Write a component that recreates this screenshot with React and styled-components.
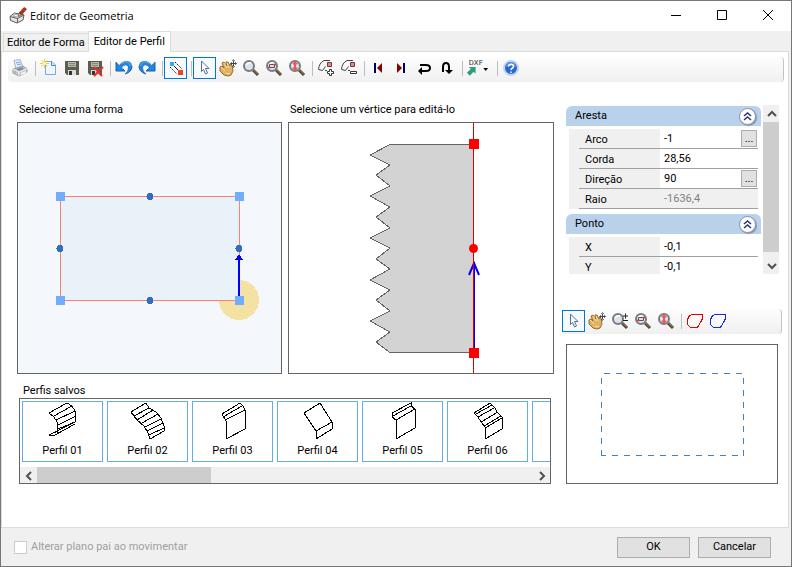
import { useState } from 'react';
import styled, { createGlobalStyle, css } from 'styled-components';

const color = {
    text: '#000000',
    textMuted: '#a0a0a0',
    surface: '#f0f0f0',
    white: '#ffffff',
    line: '#dcdcdc',
    frame: '#646464',
    thumb: '#cdcdcd',
    accent: '#0078d7',
    header: '#b9d1ea',
};

const GlobalStyle = createGlobalStyle`
    * {
        box-sizing: border-box;
    }
    body {
        margin: 0;
        background: ${color.surface};
        color: ${color.text};
        font-family: Roboto, "Liberation Sans", sans-serif;
        font-size: 11px;
        line-height: 16px;
    }
    button, input {
        margin: 0;
        padding: 0;
        color: inherit;
        font: inherit;
    }
    svg {
        display: block;
    }
`;

const Window = styled.div`
    display: flex;
    flex-direction: column;
    min-height: 100vh;
    border: 1px solid #777777;
    background: ${color.surface};
`;

const TitleBar = styled.header`
    display: flex;
    align-items: center;
    height: 30px;
    padding-left: 8px;
    background: ${color.white};
`;

const Title = styled.h1`
    flex: 1;
    margin: 0 0 0 3px;
    font-family: "Open Sans", "Noto Sans", sans-serif;
    font-size: 11px;
    font-weight: 400;
`;

const CaptionButton = styled.button`
    display: flex;
    align-items: center;
    justify-content: center;
    width: 46px;
    height: 30px;
    border: none;
    background: transparent;
`;

const TabStrip = styled.div`
    display: flex;
    align-items: flex-end;
    height: 20px;
    padding-left: 2px;
`;

const Tab = styled.button`
    height: ${props => props.$active ? '21px' : '18px'};
    margin-bottom: ${props => props.$active ? '-1px' : '0'};
    padding: 0 ${props => props.$active ? '5px' : '3px'};
    border: 1px solid ${color.line};
    border-bottom: none;
    background: ${props => props.$active ? color.white : color.surface};
    line-height: 16px;
    z-index: 1;
    & + & {
        margin-left: -1px;
    }
`;

const Page = styled.main`
    flex: 1;
    margin-right: 2px;
    padding: 5px 4px 43px 6px;
    border: 1px solid ${color.line};
    background: ${color.white};
`;

const ToolBar = styled.div`
    display: flex;
    align-items: flex-start;
    height: 25px;
    padding-top: ${props => props.$small ? '1px' : '0'};
    border-right: 1px solid #c4c4c4;
    border-radius: 4px;
    background: linear-gradient(#fdfdfd, #f0f0f0);
`;

const ToolButton = styled.button`
    display: flex;
    align-items: center;
    justify-content: center;
    flex: none;
    width: ${props => props.$wide ? '29px' : '23px'};
    height: 22px;
    border: 1px solid ${props => props.$checked ? color.accent : 'transparent'};
    background: ${props => props.$checked ? '#f7fafd' : 'transparent'};
`;

const Separator = styled.span`
    flex: none;
    width: 1px;
    height: 15px;
    margin: 4px 1px 0 4px;
    background: #bdbdbd;
`;

const Workspace = styled.div`
    display: grid;
    grid-template-columns: minmax(0, 1fr) 216px;
    gap: 12px;
    padding: 20px 2px 0 9px;
`;

const EditorColumn = styled.div`
    display: flex;
    flex-direction: column;
    gap: 9px;
    min-width: 0;
`;

const CanvasRow = styled.div`
    display: grid;
    grid-template-columns: 1fr 1fr;
    gap: 6px;
`;

const CanvasTitle = styled.h2`
    margin: 0 0 4px 2px;
    font-size: 11px;
    font-weight: 400;
`;

const Canvas = styled.div`
    display: flex;
    align-items: center;
    justify-content: center;
    overflow: hidden;
    border: 1px solid ${color.frame};
    background: ${props => props.$tinted ? '#f4f8fc' : color.white};
`;

const SavedSection = styled.section`
    margin: 0 3px 0 2px;
`;

const SavedTitle = styled.h2`
    margin: 0 0 0 4px;
    font-size: 11px;
    font-weight: 400;
    line-height: 15px;
`;

const SavedBox = styled.div`
    overflow: hidden;
    border: 1px solid ${color.frame};
`;

const SavedList = styled.div`
    display: flex;
    gap: 4px;
    overflow: hidden;
    padding: 2px 0 5px 2px;
`;

const SavedItem = styled.button`
    display: flex;
    flex-direction: column;
    align-items: center;
    flex: none;
    width: 81px;
    height: 61px;
    border: 1px solid #64ade9;
    background: ${color.white};
`;

const ScrollBar = styled.div`
    display: flex;
    flex-direction: ${props => props.$vertical ? 'column' : 'row'};
    flex: none;
    ${props => props.$vertical ? css`width: 16px;` : css`height: 16px;`}
    background: ${color.surface};
`;

const ScrollArrow = styled.button`
    display: flex;
    align-items: center;
    justify-content: center;
    flex: none;
    width: 17px;
    height: 17px;
    border: none;
    background: transparent;
`;

const ScrollTrack = styled.div`
    flex: 1;
`;

const ScrollThumb = styled.div`
    width: ${props => props.$vertical ? '100%' : '35%'};
    height: ${props => props.$vertical ? '96%' : '100%'};
    background: ${color.thumb};
`;

const SideColumn = styled.aside`
    display: flex;
    flex-direction: column;
    padding-top: 3px;
`;

const PropertyPanel = styled.div`
    display: flex;
    gap: 2px;
    height: 169px;
    margin: 0 3px 35px 0;
`;

const PropertyList = styled.div`
    flex: 1;
    min-width: 0;
    overflow: hidden;
`;

const GroupHeader = styled.div`
    display: flex;
    align-items: center;
    justify-content: space-between;
    height: 20px;
    margin: 1px 0 3px;
    padding: 0 5px 0 9px;
    border-radius: 6px 6px 0 0;
    background: ${color.header};
`;

const GroupBody = styled.div`
    margin: 0 3px 5px;
`;

const PropertyRow = styled.div`
    display: grid;
    grid-template-columns: 91px minmax(0, 1fr);
    height: 20px;
    background: linear-gradient(#a0a0a0, #a0a0a0) 10px 100% / 100% 1px no-repeat ${color.surface};
`;

const PropertyLabel = styled.label`
    padding-left: 16px;
    line-height: 21px;
`;

const PropertyValue = styled.div`
    display: flex;
    height: 19px;
    padding-right: 1px;
    background: ${props => props.$disabled ? color.surface : color.white};
`;

const PropertyInput = styled.input`
    flex: 1;
    min-width: 0;
    padding-left: 4px;
    border: none;
    background: transparent;
    &:disabled {
        color: #808080;
    }
`;

const EllipsisButton = styled.button`
    width: 16px;
    height: 17px;
    margin-top: 1px;
    border: 1px solid #adadad;
    background: #e1e1e1;
`;

const RoundButton = styled.button`
    display: flex;
    align-items: center;
    justify-content: center;
    width: 17px;
    height: 17px;
    border: 1px solid #8790ad;
    border-radius: 50%;
    background: ${color.white};
    box-shadow: 1px 1px 1px #8494b4;
`;

const PreviewTools = styled.div`
    margin: 0 0 10px -4px;
`;

const Preview = styled(Canvas)`
    margin-right: 4px;
`;

const Footer = styled.footer`
    display: flex;
    align-items: center;
    justify-content: space-between;
    height: 38px;
    padding: 0 20px 0 13px;
`;

const CheckLabel = styled.label`
    display: flex;
    align-items: center;
    gap: 4px;
    color: ${color.textMuted};
`;

const CheckBox = styled.input`
    appearance: none;
    width: 13px;
    height: 13px;
    border: 1px solid #cccccc;
    background: ${color.white};
`;

const ButtonGroup = styled.div`
    display: flex;
    gap: 8px;
`;

const DialogButton = styled.button`
    width: 73px;
    height: 21px;
    border: 1px solid #adadad;
    background: #e1e1e1;
`;

const Icon = ({ size = 18, children }) => (
    <svg width={size} height={size} viewBox={`0 0 ${size} ${size}`} fill="none" aria-hidden="true">
        {children}
    </svg>
);

const AppIcon = () => (
    <Icon>
        <path d="M1 9.500 5.500 6 15 8l-1 5-6 3-6.500-2.500z" fill="#e4e4e4" stroke="#5c5c5c" />
        <path d="m1 9.500 7.500 2L15 8M8.500 11.500V16" stroke="#5c5c5c" />
        <path d="m4 9 2.500-1.500L11 8.500 8.500 10z" fill="#fff" stroke="#8a8a8a" strokeWidth=".7" />
        <path d="m10 6 5-5.500 2.500 1.500-5 6z" fill="#b8301c" stroke="#7c2416" strokeWidth=".7" />
        <path d="m10 6 2.500 2L9 9.500z" fill="#e3b887" stroke="#50351f" strokeWidth=".5" />
    </Icon>
);

const PrintIcon = () => (
    <Icon>
        <path d="m3 1.500 6-1L12 8l-7 2z" fill="#e4f0fc" stroke="#9db5d3" />
        <path d="m5 4 4-1M6 6l4-1" stroke="#6ea5dd" />
        <path d="m2 10 10-3 4 3v3l-8 4-6-3z" fill="#c3c5c8" stroke="#9a9da3" />
        <path d="m2 10 6 3 8-3M8 13v4" stroke="#f2f2f2" />
        <path d="m5 10 6-2 2 2-5 2z" fill="#888e98" />
        <path d="m10 14 5-2v2l-5 2z" fill="#f3f6fa" />
        <path d="M4 13h1" stroke="#57c047" />
    </Icon>
);

const NewIcon = () => (
    <Icon>
        <path d="M5.500 2.500h6.500l3.500 3.500v9.500h-10z" fill="#eef6ff" stroke="#7ba9dc" />
        <path d="M11.500 2.500V6.500h4" fill="#cfe3f8" stroke="#4c87c7" />
        <path d="M4.500 0v9M0 4.500h9M1.500 1.500l6 6M7.500 1.500l-6 6" stroke="#efcc37" />
        <circle cx="4.500" cy="4.500" r="1.500" fill="#fff9bd" />
    </Icon>
);

const SaveIcon = ({ remove }) => (
    <Icon>
        <path d="M2 2h14v14H4l-2-2z" fill="#5c5c50" />
        <path d="M5 3h8v5H5z" fill="#b5b7a0" />
        <path d="M6 4.500h6M6 6.500h6" stroke="#8b8d7a" />
        <path d="M5 11h8v5H5z" fill="#dcdcd6" />
        <path d="M6 12h3v4H6z" fill="#333" />
        {remove && <path d="m8 8 8 9M17 8l-9 9" stroke="#e3302f" strokeWidth="2" />}
    </Icon>
);

const UndoIcon = ({ flip }) => (
    <Icon>
        <g transform={flip ? 'matrix(-1 0 0 1 18 0)' : undefined}>
            <path d="M1 3v9h9L7 9C8.500 5.500 13 5 13 9q0 3-3 6 7-2 7-8c0-6-9-7-12.500-1z" fill="#2583da" />
            <path d="M1 3v9h9L7.500 9.500M10 15q7-2 7-8" stroke="#1760b0" />
            <path d="M7 5c3-4 8-2 8 2" stroke="#6ab5ef" />
        </g>
    </Icon>
);

const EdgeIcon = () => (
    <Icon>
        <path d="m3 8 7 7M8 3l7 7" stroke="#111" strokeDasharray="1.500 1" />
        <path d="m6 6 5 5" stroke="#111" />
        <path d="M3 3h4v4H3z" fill="#31a9ea" />
        <path d="M11 11h5v5h-5z" fill="#ef3f2f" />
    </Icon>
);

const PointerIcon = () => (
    <Icon>
        <path d="M5.500 2 13 9.500H9.500l2 4.500-2 1-2-4.500-2 2z" fill="#f9fcff" stroke="#58708f" />
    </Icon>
);

const HandIcon = () => (
    <Icon>
        <path d="m1 8 2-1 2 2-2-5 2-1 3 4-1-4h2l2 4 1-2 1 1 1 6-2 4-3 1-4-1-4-4z" fill="#dfb367" stroke="#9c6925" />
        <path d="m5 4 3 5M8 4l2 5M2 8l4 4M7 14l4 1" stroke="#fae0a1" />
        <path d="M14.500 1.500v6M11.500 4.500h6" stroke="#3c4450" />
        <path d="m13 2 1.500-1.500L16 2M13 7l1.500 1.500L16 7M13 3l-1.500 1.500L13 6M16 3l1.500 1.500L16 6" stroke="#3c4450" strokeWidth=".7" />
    </Icon>
);

const LensIcon = ({ kind }) => (
    <Icon>
        <path d="m11 11 5 5" stroke="#4a4038" strokeWidth="3" />
        <path d="m11.500 11 4.500 4.500" stroke="#b48a4c" />
        <circle cx="7" cy="7" r="5" fill="#dde3e8" stroke="#757c84" strokeWidth="2" />
        <path d="M4 6q2-3 5-2" stroke="#fff" strokeWidth="1.500" />
        {kind === 'area' && (
            <>
                <path d="M4.500 5.500h5v3h-5z" stroke="#555" />
                <path d="M3 8.500h3M8 5.500h3" stroke="#dc3c40" strokeWidth="1.500" />
            </>
        )}
        {kind === 'fit' && <path d="M7 2.500v9M4.500 4.500h5M4.500 9.500h5" stroke="#f0555a" strokeWidth="2" />}
        {kind === 'scale' && <path d="M12 4h5M14.500 1.500v5M12 8.500h5" stroke="#222" />}
    </Icon>
);

const VertexIcon = ({ remove }) => (
    <Icon>
        <path d="M13 1.500H7Q2 4 1.500 10.500l4 1 3-4M8 11.500h2" stroke="#444" />
        <path d="M10.500 3.500h4v4h-4z" fill="#f08580" stroke="#6b3c3a" />
        {remove
            ? <path d="M10.500 12.500h6v2h-6z" fill="#fff" stroke="#333" />
            : <path d="M12.500 10.500h2v2h2v2h-2v2h-2v-2h-2v-2h2z" fill="#fff" stroke="#333" />}
    </Icon>
);

const StepIcon = ({ last }) => (
    <Icon>
        <path d={last ? 'M5 4v10l5-5z' : 'M13 4v10L8 9z'} fill="#870000" />
        <path d={last ? 'M11 4h2v10h-2z' : 'M5 4h2v10H5z'} fill="#00006c" />
    </Icon>
);

const TurnIcon = ({ down }) => (
    <Icon>
        <g transform={down ? 'matrix(0 1 -1 0 18 0)' : undefined}>
            <path d={down ? 'M13 13H8q-4 0-4-3t4-3h4' : 'M5 6h6q4 0 4 3t-4 3H6'} stroke="#000" strokeWidth="2" />
            <path d={down ? 'm15 7-4-4v8z' : 'm3 12 4-4v8z'} fill="#000" />
        </g>
    </Icon>
);

const DxfIcon = () => (
    <svg width="28" height="20" viewBox="0 0 28 20" aria-hidden="true">
        <text x="4" y="7" fontFamily="Roboto, sans-serif" fontSize="8" fill="#333">DXF</text>
        <path d="m2 15 4-4-2-2h7v7l-2-2-4 4z" fill="#2d9c77" />
        <path d="M19 10h5l-2.500 3z" fill="#000" />
    </svg>
);

const HelpIcon = () => (
    <Icon>
        <circle cx="9" cy="9" r="7" fill="#2869ce" stroke="#c3d5ee" strokeWidth="2" />
        <path d="M4 8a5 5 0 0 1 10 0Q9 6 4 8" fill="#5a90e4" />
        <path d="M6.500 7.500c0-3 5-3 5 0 0 2-2.500 1.500-2.500 3.500M9 12.500V14" stroke="#fff" strokeWidth="1.500" />
    </Icon>
);

const ShapeIcon = ({ stroke }) => (
    <Icon>
        <path d="M6.500 2.500h10v4l-2 4-3 5h-7l-3-3v-5l2-4z" fill="#fafafa" stroke={stroke} shapeRendering="crispEdges" />
    </Icon>
);

const Chevron = ({ d }) => (
    <Icon size={10}>
        <path d={d} stroke="#505050" strokeWidth="2" />
    </Icon>
);

const mainTools = [
    { label: 'Imprimir', icon: <PrintIcon /> },
    null,
    { label: 'Novo', icon: <NewIcon /> },
    { label: 'Salvar', icon: <SaveIcon /> },
    { label: 'Excluir', icon: <SaveIcon remove /> },
    null,
    { label: 'Desfazer', icon: <UndoIcon /> },
    { label: 'Refazer', icon: <UndoIcon flip /> },
    null,
    { label: 'Arestas', icon: <EdgeIcon />, checked: true },
    null,
    { label: 'Selecionar', icon: <PointerIcon />, checked: true },
    { label: 'Mover', icon: <HandIcon /> },
    { label: 'Zoom', icon: <LensIcon /> },
    { label: 'Zoom janela', icon: <LensIcon kind="area" /> },
    { label: 'Zoom tudo', icon: <LensIcon kind="fit" /> },
    null,
    { label: 'Inserir vértice', icon: <VertexIcon /> },
    { label: 'Remover vértice', icon: <VertexIcon remove /> },
    null,
    { label: 'Anterior', icon: <StepIcon /> },
    { label: 'Próximo', icon: <StepIcon last /> },
    { label: 'Inverter horizontal', icon: <TurnIcon /> },
    { label: 'Inverter vertical', icon: <TurnIcon down /> },
    null,
    { label: 'Exportar DXF', icon: <DxfIcon />, wide: true },
    null,
    { label: 'Ajuda', icon: <HelpIcon /> },
];

const previewTools = [
    { label: 'Selecionar', icon: <PointerIcon />, checked: true },
    { label: 'Mover', icon: <HandIcon /> },
    { label: 'Zoom', icon: <LensIcon kind="scale" /> },
    { label: 'Zoom janela', icon: <LensIcon kind="area" /> },
    { label: 'Zoom tudo', icon: <LensIcon kind="fit" /> },
    null,
    { label: 'Forma vermelha', icon: <ShapeIcon stroke="#e60000" /> },
    { label: 'Forma azul', icon: <ShapeIcon stroke="#1030e0" /> },
];

const Tools = ({ items, small }) => (
    <ToolBar $small={small}>
        {items.map((item, index) => item
            ? <ToolButton key={index} aria-label={item.label} $checked={item.checked} $wide={item.wide}>{item.icon}</ToolButton>
            : <Separator key={index} />)}
    </ToolBar>
);

// Line drawings of the bent sheets, 81 units wide
const savedProfiles = [
    { name: 'Perfil 01', d: 'M27 11 45 1 50 4 53 9 54 14 53 20 37 28M27 11 32 15 35 20 36 25 35 31M32 14 50 4M34 18 53 9M36 23 54 14M36 27 53 20M35 29 27 33H33L53 22M33 31 37 28' },
    { name: 'Perfil 02', d: 'M24 10 39 1 42 6 49 10 54 16 57 24V29L43 37 41 31 37 24 30 18ZM27 14 42 6M30 18 46 8M35 21 51 12M38 25 54 17M40 29 56 21M42 33 57 26' },
    { name: 'Perfil 03', d: 'M30 12 48 1 51 4 53 8V27L34 37V19ZM31 15 50 4M33 18 53 8' },
    { name: 'Perfil 04', d: 'M27 11 43 1 55 20V27L39 37V29ZM39 29 55 20' },
    { name: 'Perfil 05', d: 'M30 11 49 1V4L53 7V26L34 37V18L30 15ZM31 14 49 4M34 18 53 7' },
    { name: 'Perfil 06', d: 'M27 11 43 1 48 6 50 10 55 15V27L38 37V25L34 20 31 15ZM29 12 45 3M31 15 47 6M34 20 51 10M37 24 54 14M38 26 55 16' },
    { name: '', d: '' },
];

const propertyGroups = [
    {
        name: 'Aresta',
        rows: [
            { id: 'arco', label: 'Arco', value: '-1', more: true },
            { id: 'corda', label: 'Corda', value: '28,56' },
            { id: 'direcao', label: 'Direção', value: '90', more: true },
            { id: 'raio', label: 'Raio', value: '-1636,4', disabled: true },
        ],
    },
    {
        name: 'Ponto',
        rows: [
            { id: 'x', label: 'X', value: '-0,1' },
            { id: 'y', label: 'Y', value: '-0,1' },
        ],
    },
];

const ShapeDrawing = () => (
    <svg width="263" height="250" viewBox="0 0 263 250" shapeRendering="crispEdges">
        <circle cx="221" cy="177" r="20" fill="#f4e1a4" />
        <path d="M42.500 73.500h179v104h-179z" fill="#e9f1f9" stroke="#fa8072" />
        {[[42, 73], [221, 73], [42, 177], [221, 177]].map(([x, y]) =>
            <rect key={`${x}-${y}`} x={x - 4} y={y - 4} width="9" height="9" fill="#70adff" />)}
        {[[132, 73], [42, 125], [221, 125], [132, 177]].map(([x, y]) =>
            <circle key={`${x}-${y}`} cx={x} cy={y + 0.5} r="3.500" fill="#2f6fbe" />)}
        <path d="M220 136h2v37h-2zM221 131l4 6h-8z" fill="#0000ff" />
    </svg>
);

const ProfileDrawing = () => (
    <svg width="264" height="250" viewBox="0 0 264 250">
        <path
            d="M184.500 21.500H101L81 32 101 42 87 52 101 63 81 73 101 84 87 94 101 105 81 115 101 125 87 136 101 146 81 157 101 167 87 177 101 188 81 198 101 209 87 219 101 229.500H184.500Z"
            fill="#d3d3d3"
            stroke="#646464"
            shapeRendering="crispEdges"
        />
        <path d="M185 139v86" stroke="#0000ff" strokeWidth="2" />
        <path d="m180 152 5-12 5 12" stroke="#0000ff" strokeWidth="2" fill="none" />
        <path d="M184.500 0v250" stroke="#dc0000" />
        <path d="M180 16h10v10h-10zM180 225h10v10h-10z" fill="#ff0000" />
        <circle cx="184.500" cy="125.500" r="4.500" fill="#ff0000" />
    </svg>
);

const PropertyGroup = ({ group }) => (
    <>
        <GroupHeader>
            {group.name}
            <RoundButton aria-label={`Recolher ${group.name}`}>
                <svg width="9" height="11" viewBox="0 0 9 11" fill="none">
                    <path d="m1 5 3.500-3L8 5M1 9l3.500-3L8 9" stroke="#27366c" strokeWidth="1.500" />
                </svg>
            </RoundButton>
        </GroupHeader>
        <GroupBody>
            {group.rows.map(row =>
                <PropertyRow key={row.id}>
                    <PropertyLabel htmlFor={row.id}>{row.label}</PropertyLabel>
                    <PropertyValue $disabled={row.disabled}>
                        <PropertyInput id={row.id} defaultValue={row.value} disabled={row.disabled} />
                        {row.more && <EllipsisButton aria-label={`Editar ${row.label}`}>...</EllipsisButton>}
                    </PropertyValue>
                </PropertyRow>)
            }
        </GroupBody>
    </>
);

const App = () => {
    const [tab, setTab] = useState('Editor de Perfil');
    return (
        <>
            <GlobalStyle />
            <Window>
                <TitleBar>
                    <AppIcon />
                    <Title>Editor de Geometria</Title>
                    <CaptionButton aria-label="Minimizar">
                        <Icon size={12}><path d="M1 5.500h10" stroke="#000" /></Icon>
                    </CaptionButton>
                    <CaptionButton aria-label="Maximizar">
                        <Icon size={12}><path d="M1.500 .5h9v9h-9z" stroke="#000" /></Icon>
                    </CaptionButton>
                    <CaptionButton aria-label="Fechar">
                        <Icon size={12}><path d="m1 0 10 10M11 0 1 10" stroke="#000" /></Icon>
                    </CaptionButton>
                </TitleBar>
                <TabStrip>
                    {['Editor de Forma', 'Editor de Perfil'].map(name =>
                        <Tab key={name} $active={tab === name} onClick={() => setTab(name)}>{name}</Tab>)
                    }
                </TabStrip>
                <Page>
                    <Tools items={mainTools} />
                    <Workspace>
                        <EditorColumn>
                            <CanvasRow>
                                <section>
                                    <CanvasTitle>Selecione uma forma</CanvasTitle>
                                    <Canvas $tinted><ShapeDrawing /></Canvas>
                                </section>
                                <section>
                                    <CanvasTitle>Selecione um vértice para editá-lo</CanvasTitle>
                                    <Canvas><ProfileDrawing /></Canvas>
                                </section>
                            </CanvasRow>
                            <SavedSection>
                                <SavedTitle>Perfis salvos</SavedTitle>
                                <SavedBox>
                                    <SavedList>
                                        {savedProfiles.map((profile, index) =>
                                            <SavedItem key={index}>
                                                <svg width="81" height="41" viewBox="0 0 81 41" fill="none" stroke="#000" shapeRendering="crispEdges">
                                                    <path d={profile.d} />
                                                </svg>
                                                {profile.name}
                                            </SavedItem>)
                                        }
                                    </SavedList>
                                    <ScrollBar>
                                        <ScrollArrow aria-label="Rolar para a esquerda"><Chevron d="M7 1 3 5l4 4" /></ScrollArrow>
                                        <ScrollTrack><ScrollThumb /></ScrollTrack>
                                        <ScrollArrow aria-label="Rolar para a direita"><Chevron d="m3 1 4 4-4 4" /></ScrollArrow>
                                    </ScrollBar>
                                </SavedBox>
                            </SavedSection>
                        </EditorColumn>
                        <SideColumn>
                            <PropertyPanel>
                                <PropertyList>
                                    {propertyGroups.map(group => <PropertyGroup key={group.name} group={group} />)}
                                </PropertyList>
                                <ScrollBar $vertical>
                                    <ScrollArrow aria-label="Rolar para cima"><Chevron d="m1 7 4-4 4 4" /></ScrollArrow>
                                    <ScrollTrack><ScrollThumb $vertical /></ScrollTrack>
                                    <ScrollArrow aria-label="Rolar para baixo"><Chevron d="m1 3 4 4 4-4" /></ScrollArrow>
                                </ScrollBar>
                            </PropertyPanel>
                            <PreviewTools>
                                <Tools items={previewTools} small />
                            </PreviewTools>
                            <Preview>
                                <svg width="210" height="138" viewBox="0 0 210 138" fill="none" shapeRendering="crispEdges">
                                    <path d="M34.500 110.500v-82h142v82z" stroke="#4682b4" strokeDasharray="6 6" />
                                </svg>
                            </Preview>
                        </SideColumn>
                    </Workspace>
                </Page>
                <Footer>
                    <CheckLabel>
                        <CheckBox type="checkbox" disabled />
                        Alterar plano pai ao movimentar
                    </CheckLabel>
                    <ButtonGroup>
                        <DialogButton>OK</DialogButton>
                        <DialogButton>Cancelar</DialogButton>
                    </ButtonGroup>
                </Footer>
            </Window>
        </>
    );
};

export default App;
